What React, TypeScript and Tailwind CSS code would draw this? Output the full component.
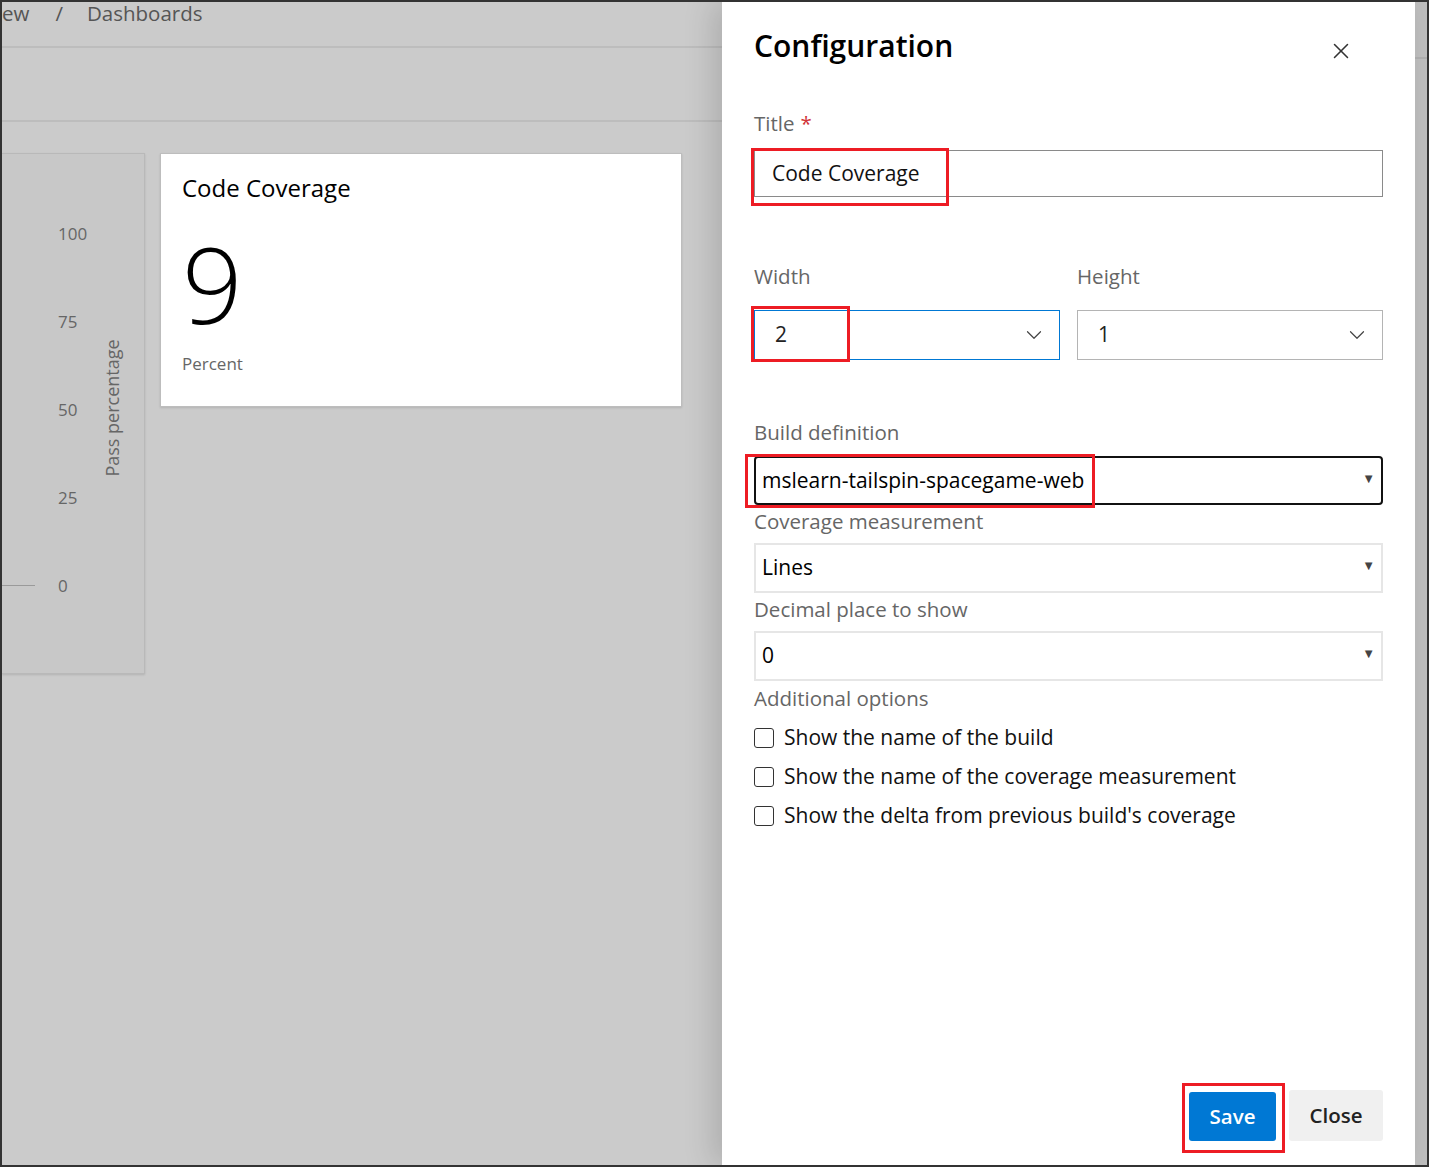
import { ChevronDown, X } from "lucide-react";

const font = "font-['Open_Sans',sans-serif]";

interface FieldLabelProps {
  text: string;
  required?: boolean;
  className?: string;
}

const FieldLabel: React.FC<FieldLabelProps> = ({ text, required, className }) => {
  return (
    <div className={`text-[20.5px] leading-[28px] text-[#666] ${className ?? ""}`}>
      {text}
      {required && <span className="ml-1.5 text-[#d13438]">*</span>}
    </div>
  );
};

const Highlight: React.FC<{ className: string }> = ({ className }) => {
  return <div className={`pointer-events-none absolute border-[3px] border-[#ed1c24] ${className}`} />;
};

interface ComboProps {
  value: string;
  focused?: boolean;
}

const Combo: React.FC<ComboProps> = ({ value, focused }) => {
  return (
    <div
      className={`flex h-[50px] items-center justify-between border pl-5 pr-3 ${
        focused ? "border-[#0078d4]" : "border-[#b4b4b4]"
      }`}
    >
      <span className="text-[21px] text-[#222]">{value}</span>
      <ChevronDown size={26} strokeWidth={1.1} className="text-[#444]" />
    </div>
  );
};

interface LegacySelectProps {
  value: string;
  dark?: boolean;
}

const LegacySelect: React.FC<LegacySelectProps> = ({ value, dark }) => {
  return (
    <div
      className={`flex items-center justify-between pl-[6px] pr-[6px] ${
        dark
          ? "h-[49px] rounded-[4px] border-2 border-[#111]"
          : "h-[50px] border-2 border-[#e6e6e6]"
      }`}
    >
      <span className="text-[21px] text-black">{value}</span>
      <span className="pb-1 text-[13px] text-[#444]">▼</span>
    </div>
  );
};

const Check: React.FC<{ label: string }> = ({ label }) => {
  return (
    <label className="flex h-[39px] items-center gap-[10px]">
      <span className="h-[20px] w-[20px] rounded-[3px] border-[1.5px] border-[#333] bg-white" />
      <span className="text-[21px] text-[#111]">{label}</span>
    </label>
  );
};

const ChartTile: React.FC = () => {
  const ticks = ["100", "75", "50", "25", "0"];
  return (
    <div className="relative h-[521px] w-[143px] border-y border-r border-[#b9b9b9] bg-[#c8c8c8] shadow-[0_1px_2px_rgba(0,0,0,0.12)]">
      <div className="flex flex-col gap-[64px] pl-[56px] pt-[68px]">
        {ticks.map((t) => (
          <span key={t} className="h-[24px] text-[17px] leading-[24px] text-[#666]">
            {t}
          </span>
        ))}
      </div>
      <div className="absolute left-0 top-[431px] h-px w-[33px] bg-[#9a9a9a]" />
      <div className="absolute left-[98px] top-[374px] w-[240px] origin-top-left -rotate-90 text-center text-[18px] leading-[24px] text-[#666]">
        Pass percentage
      </div>
    </div>
  );
};

const CoverageTile: React.FC = () => {
  return (
    <div className="h-[254px] w-[522px] border border-[#bdbdbd] bg-white px-[21px] pt-[18px] shadow-[0_1px_2px_rgba(0,0,0,0.12)]">
      <div className="text-[24px] leading-[32px] text-black">Code Coverage</div>
      <div className="mt-[37px] text-[106px] font-light leading-[84px] text-black">9</div>
      <div className="mt-[27px] text-[17px] leading-[24px] text-[#666]">Percent</div>
    </div>
  );
};

const Dashboard: React.FC = () => {
  return (
    <div className="flex min-w-0 flex-1 flex-col bg-[#cbcbcb]">
      <div className="flex h-[46px] items-start border-b-2 border-[#bdbdbd] text-[20.5px] leading-[22px] text-[#555]">
        <span>ew</span>
        <span className="ml-[26px]">/</span>
        <span className="ml-[24px]">Dashboards</span>
      </div>
      <div className="h-[74px] border-b-2 border-[#bdbdbd]" />
      <div className="flex items-start gap-[15px] pt-[31px]">
        <ChartTile />
        <CoverageTile />
      </div>
    </div>
  );
};

const ConfigPanel: React.FC = () => {
  return (
    <div className="relative z-10 flex h-full w-[693px] shrink-0 flex-col bg-white px-8 shadow-[-10px_0_28px_rgba(0,0,0,0.14)]">
      <div className="mt-[26px] flex items-center justify-between">
        <h1 className="text-[30px] font-semibold leading-[36px] text-black">Configuration</h1>
        <button className="mr-[29px] mt-[10px] text-[#333]">
          <X size={26} strokeWidth={1.4} />
        </button>
      </div>

      <FieldLabel text="Title" required className="mt-[45px]" />
      <div className="relative mt-[13px]">
        <div className="flex h-[47px] items-center border border-[#8a8a8a] pl-[17px] text-[21px] text-[#111]">
          Code Coverage
        </div>
        <Highlight className="-left-[3px] -top-[2px] h-[58px] w-[198px]" />
      </div>

      <div className="mt-[65px] grid grid-cols-2 gap-x-[17px]">
        <div>
          <FieldLabel text="Width" />
          <div className="relative mt-[20px]">
            <Combo value="2" focused />
            <Highlight className="-left-[3px] -top-[4px] h-[56px] w-[99px]" />
          </div>
        </div>
        <div>
          <FieldLabel text="Height" />
          <div className="mt-[20px]">
            <Combo value="1" />
          </div>
        </div>
      </div>

      <FieldLabel text="Build definition" className="mt-[58px]" />
      <div className="relative mt-[10px]">
        <LegacySelect value="mslearn-tailspin-spacegame-web" dark />
        <Highlight className="-left-[9px] -top-[2px] h-[54px] w-[350px]" />
      </div>

      <FieldLabel text="Coverage measurement" className="mt-[2px]" />
      <div className="mt-[8px]">
        <LegacySelect value="Lines" />
      </div>

      <FieldLabel text="Decimal place to show" className="mt-[2px]" />
      <div className="mt-[8px]">
        <LegacySelect value="0" />
      </div>

      <FieldLabel text="Additional options" className="mt-[3px]" />
      <div className="mt-[6px] flex flex-col">
        <Check label="Show the name of the build" />
        <Check label="Show the name of the coverage measurement" />
        <Check label="Show the delta from previous build's coverage" />
      </div>

      <div className="mb-[22px] mt-auto flex justify-end gap-[13px]">
        <div className="relative">
          <button className="h-[49px] w-[87px] rounded-[3px] bg-[#0078d4] text-[20.5px] font-semibold text-white">
            Save
          </button>
          <Highlight className="-left-[7px] -top-[9px] h-[70px] w-[103px]" />
        </div>
        <button className="h-[51px] w-[94px] -translate-y-[2px] rounded-[3px] bg-[#f0f0f0] text-[20.5px] font-semibold text-[#222]">
          Close
        </button>
      </div>
    </div>
  );
};

export default function App() {
  return (
    <div className={`${font} flex h-[1167px] w-[1429px] overflow-hidden border-2 border-[#333]`}>
      <Dashboard />
      <ConfigPanel />
      <div className="w-[12px] shrink-0 bg-[#bebebe]">
        <div className="mt-[55px] h-[2px] bg-[#b0b0b0]" />
      </div>
    </div>
  );
}
